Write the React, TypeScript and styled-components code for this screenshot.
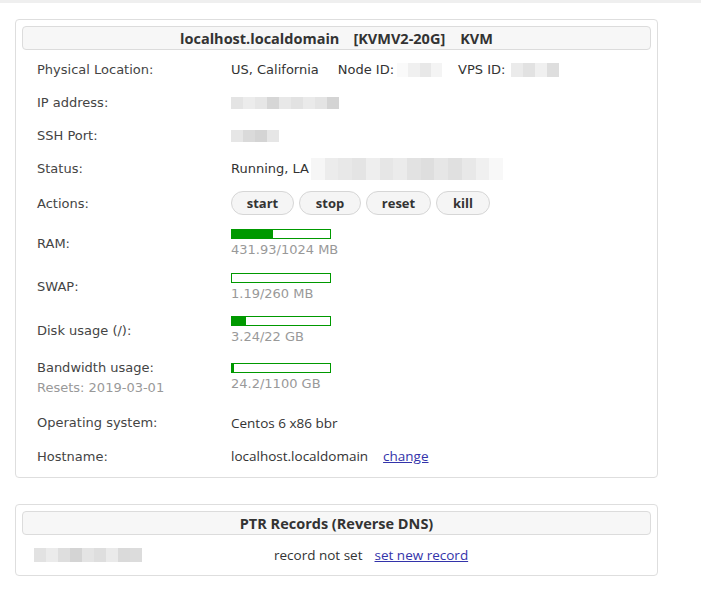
import React from "react";
import styled, { createGlobalStyle } from "styled-components";

const Global = createGlobalStyle`
  html, body { margin: 0; padding: 0; background: #fff; }
  body { font-family: "DejaVu Sans", Verdana, sans-serif; color: #333; }
`;

const TopLine = styled.div`
  height: 3px;
  background: #efefef;
`;

const Page = styled.div`
  padding: 16px 43px 20px 15px;
  display: flex;
  flex-direction: column;
  gap: 26px;
`;

const Box = styled.section<{ $pb: number }>`
  border: 1px solid #dedede;
  border-radius: 4px;
  padding: 6px 6px ${(p) => p.$pb}px 6px;
`;

const Header = styled.div`
  height: 22px;
  border: 1px solid #dcdcdc;
  border-radius: 4px;
  background: #f7f7f7;
  display: flex;
  align-items: center;
  justify-content: center;
  font-family: "Open Sans", "Noto Sans", sans-serif;
  font-weight: 700;
  font-size: 14.5px;
  color: #333;
  white-space: pre;
`;

const Rows = styled.div`
  display: flex;
  flex-direction: column;
  padding-top: 3px;
`;

const Row = styled.div<{ $h: number }>`
  height: ${(p) => p.$h}px;
  display: grid;
  grid-template-columns: 194px 1fr;
  align-items: center;
  padding-left: 15px;
  font-size: 13px;
`;

const Label = styled.div`
  color: #444;
  display: flex;
  flex-direction: column;
  gap: 5px;
`;

const Sub = styled.span`
  color: #999;
`;

const Value = styled.div`
  display: flex;
  align-items: center;
  color: #333;
`;

const Narrow = styled.span`
  font-family: "Open Sans", "Noto Sans", sans-serif;
  font-size: 13.5px;
  color: #333;
`;

const Gap = styled.span<{ $w: number }>`
  display: inline-block;
  width: ${(p) => p.$w}px;
`;

const Link = styled.a`
  font-family: "Open Sans", "Noto Sans", sans-serif;
  font-size: 13.5px;
  color: #3333aa;
  text-decoration: underline;
  cursor: pointer;
`;

const Buttons = styled.div`
  display: flex;
  gap: 5px;
`;

const Btn = styled.button<{ $w: number }>`
  width: ${(p) => p.$w}px;
  height: 24px;
  border: 1px solid #d6d6d6;
  border-radius: 12px;
  background: #f5f5f5;
  font-family: "Open Sans", "Noto Sans", sans-serif;
  font-weight: 700;
  font-size: 13px;
  color: #333;
  padding: 0;
`;

const Meter = styled.div`
  display: flex;
  flex-direction: column;
  gap: 3px;
`;

const Bar = styled.div`
  width: 98px;
  height: 8px;
  border: 1px solid #009900;
  background: #fff;
`;

const Fill = styled.div`
  height: 100%;
  background: #009900;
`;

const MeterText = styled.span`
  color: #999;
  font-size: 13px;
`;

const Mosaic = styled.span<{ $w: number; $h: number }>`
  display: inline-flex;
  width: ${(p) => p.$w}px;
  height: ${(p) => p.$h}px;
  overflow: hidden;
`;

const Tile = styled.span`
  flex: 1;
  height: 100%;
`;

const Blur: React.FC<{ w: number; h: number; shades: string[] }> = ({ w, h, shades }) => (
  <Mosaic $w={w} $h={h}>
    {shades.map((s, i) => (
      <Tile key={i} style={{ background: s }} />
    ))}
  </Mosaic>
);

const PtrRow = styled.div`
  height: 34px;
  box-sizing: border-box;
  padding: 6px 0 0 12px;
  display: grid;
  grid-template-columns: 240px 1fr;
  align-items: center;
`;

const Meters = ({ used, total, unit }: { used: number; total: number; unit: string }) => (
  <Meter>
    <Bar>
      <Fill style={{ width: `${Math.max((used / total) * 100, 2)}%` }} />
    </Bar>
    <MeterText>
      {used}/{total} {unit}
    </MeterText>
  </Meter>
);

export default function App() {
  return (
    <>
      <Global />
      <TopLine />
      <Page>
        <Box $pb={8}>
          <Header>
            localhost.localdomain
            <Gap $w={14} />
            [KVMV2-20G]
            <Gap $w={15} />
            KVM
          </Header>
          <Rows>
            <Row $h={33}>
              <Label>Physical Location:</Label>
              <Value>
                US, California
                <Gap $w={19} />
                Node ID:
                <Gap $w={3} />
                <Blur w={45} h={14} shades={["#fafafa", "#f0f0f0", "#e8e8e8", "#f4f4f4"]} />
                <Gap $w={16} />
                VPS ID:
                <Gap $w={6} />
                <Blur w={48} h={14} shades={["#ebebeb", "#e2e2e2", "#f0f0f0", "#dedede"]} />
              </Value>
            </Row>
            <Row $h={33}>
              <Label>IP address:</Label>
              <Value>
                <Blur w={108} h={12} shades={["#e4e4e4", "#ececec", "#e6e6e6", "#d6d6d6", "#e8e8e8", "#e2e2e2", "#eaeaea", "#e4e4e4", "#d4d4d4"]} />
              </Value>
            </Row>
            <Row $h={33}>
              <Label>SSH Port:</Label>
              <Value>
                <Blur w={48} h={12} shades={["#e6e6e6", "#dadada", "#d4d4d4", "#e6e6e6"]} />
              </Value>
            </Row>
            <Row $h={33}>
              <Label>Status:</Label>
              <Value>
                Running, LA
                <Gap $w={2} />
                <Blur w={192} h={22} shades={["#f6f6f6", "#ececec", "#e8e8e8", "#e4e4e4", "#eeeeee", "#e6e6e6", "#ebebeb", "#e2e2e2", "#dedede", "#e6e6e6", "#e0e0e0", "#e8e8e8", "#f0f0f0", "#f8f8f8"]} />
              </Value>
            </Row>
            <Row $h={36}>
              <Label>Actions:</Label>
              <Buttons>
                <Btn $w={63}>start</Btn>
                <Btn $w={62}>stop</Btn>
                <Btn $w={65}>reset</Btn>
                <Btn $w={54}>kill</Btn>
              </Buttons>
            </Row>
            <Row $h={44}>
              <Label>RAM:</Label>
              <Meters used={431.93} total={1024} unit="MB" />
            </Row>
            <Row $h={43}>
              <Label>SWAP:</Label>
              <Meter>
                <Bar>
                  <Fill style={{ width: "0%" }} />
                </Bar>
                <MeterText>1.19/260 MB</MeterText>
              </Meter>
            </Row>
            <Row $h={44}>
              <Label>Disk usage (/):</Label>
              <Meters used={3.24} total={22} unit="GB" />
            </Row>
            <Row $h={50}>
              <Label>
                <span>Bandwidth usage:</span>
                <Sub>Resets: 2019-03-01</Sub>
              </Label>
              <Meters used={24.2} total={1100} unit="GB" />
            </Row>
            <Row $h={41}>
              <Label>Operating system:</Label>
              <Value>
                <Narrow>Centos 6 x86 bbr</Narrow>
              </Value>
            </Row>
            <Row $h={26}>
              <Label>Hostname:</Label>
              <Value>
                <Narrow>localhost.localdomain</Narrow>
                <Gap $w={15} />
                <Link>change</Link>
              </Value>
            </Row>
          </Rows>
        </Box>
        <Box $pb={6}>
          <Header>PTR Records (Reverse DNS)</Header>
          <PtrRow>
            <Blur w={108} h={14} shades={["#e2e2e2", "#ebebeb", "#dedede", "#d4d4d4", "#e4e4e4", "#dedede", "#eaeaea", "#dadada", "#dcdcdc"]} />
            <Value>
              <Narrow>record not set</Narrow>
              <Gap $w={12} />
              <Link>set new record</Link>
            </Value>
          </PtrRow>
        </Box>
      </Page>
    </>
  );
}
